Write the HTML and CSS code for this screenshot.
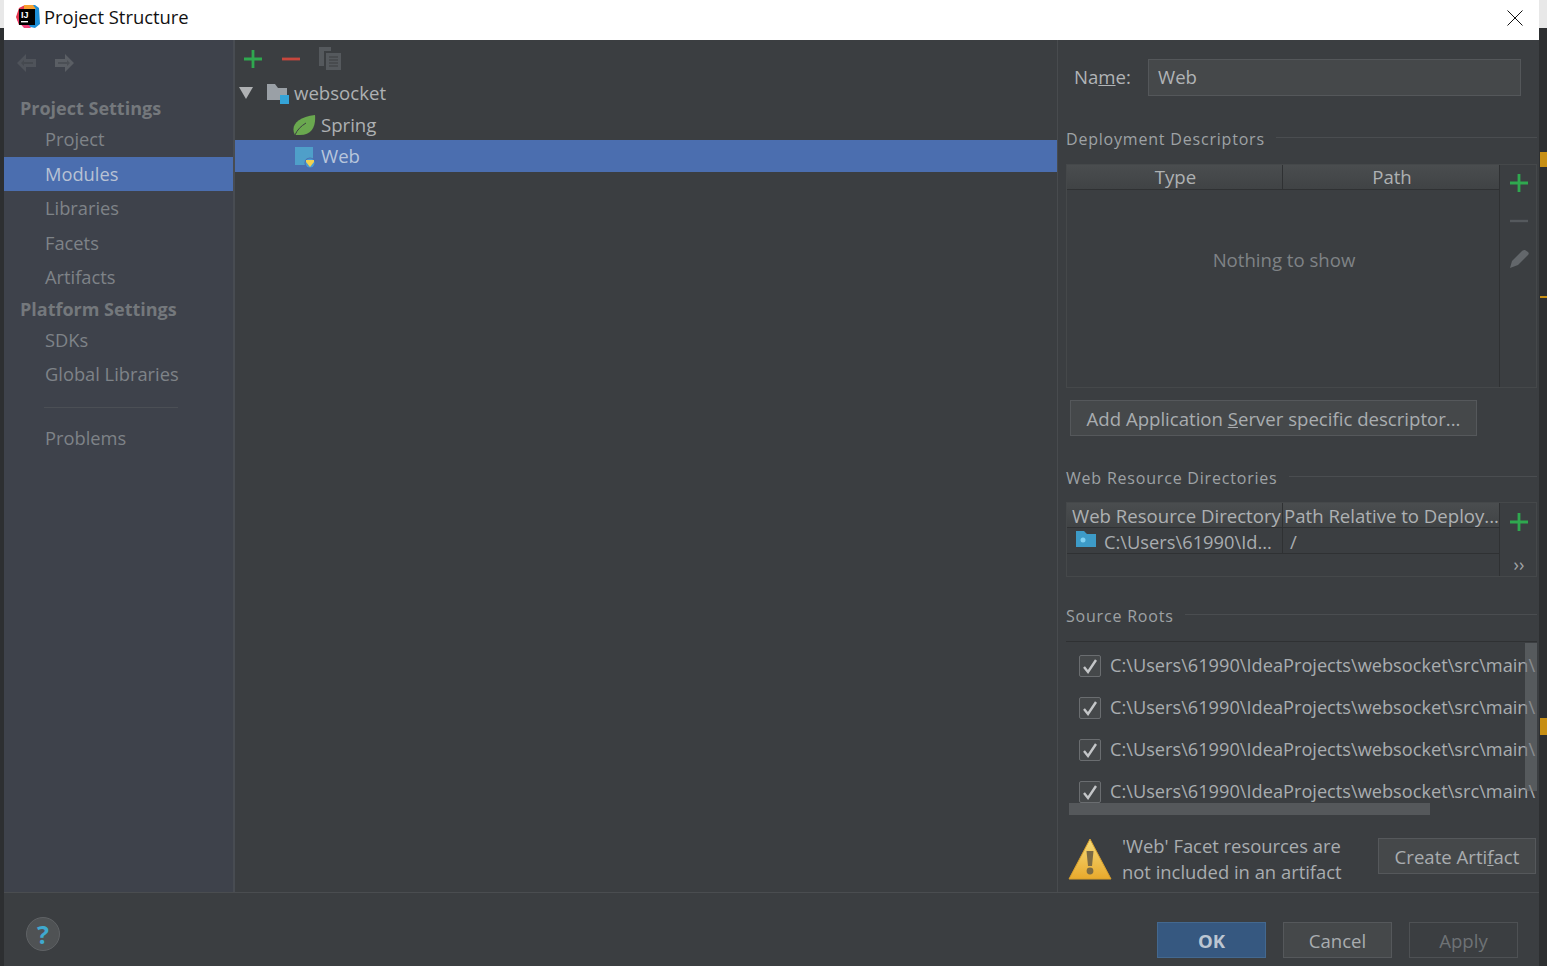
FILE: index.html
```html
<!DOCTYPE html>
<html lang="en">
<head>
<meta charset="utf-8">
<title>Project Structure</title>
<link rel="stylesheet" href="styles.css">
</head>
<body>
<svg class="defs" width="0" height="0">
  <symbol id="plus" viewBox="0 0 20 20"><path d="M10 1v18M1 10h18" fill="none" stroke="#2fa84f" stroke-width="2.800"/></symbol>
</svg>
<div class="screen">
  <div class="strip strip-left"><span class="strip-cap"></span></div>
  <div class="dialog">
    <header class="titlebar">
      <svg class="logo" width="24" height="24" viewBox="0 0 24 24">
        <path d="M3 3 9 0 10 14 3 20 0 12z" fill="#e5364f"/>
        <path d="M10 0h9l4 3 1 16-5 4-9-2z" fill="#1d8fd8"/>
        <path d="M1 15 8 23h7l-7-10z" fill="#f0407a"/>
        <path d="M8 0h9l3 4H8z" fill="#f7a030"/>
        <rect x="3" y="4" width="16" height="16" fill="#000"/>
        <text x="5" y="13" class="logo-text">IJ</text>
        <rect x="5" y="16" width="7" height="1.400" fill="#fff"/>
      </svg>
      <span class="title-text">Project Structure</span>
      <svg class="close" width="16" height="16" viewBox="0 0 16 16"><path d="M.5.5l15 15M15.500.5l-15 15" stroke="#111" stroke-width="1" fill="none"/></svg>
    </header>
    <div class="main">
      <nav class="sidebar">
        <div class="nav-arrows">
          <svg width="20" height="20" viewBox="0 0 20 20"><path d="M9 1 0 10l9 9v-5h10V6H9z" fill="#4f535a"/><path d="M7 7 4 10l3 3v-2h9V9H7z" fill="#45494f"/></svg>
          <svg width="20" height="20" viewBox="0 0 20 20"><path d="M11 1l9 9-9 9v-5H1V6h10z" fill="#5a5e64"/><path d="M13 7l3 3-3 3v-2H4V9h9z" fill="#4b4f55"/></svg>
        </div>
        <div class="nav-head nav-head-first">Project Settings</div>
        <div class="nav-item">Project</div>
        <div class="nav-item active">Modules</div>
        <div class="nav-item">Libraries</div>
        <div class="nav-item">Facets</div>
        <div class="nav-item">Artifacts</div>
        <div class="nav-head">Platform Settings</div>
        <div class="nav-item">SDKs</div>
        <div class="nav-item">Global Libraries</div>
        <div class="nav-sep"></div>
        <div class="nav-item">Problems</div>
      </nav>
      <section class="tree-pane">
        <div class="tree-tools">
          <svg class="tool-plus" width="20" height="20"><use href="#plus"/></svg>
          <svg class="tool-minus" width="20" height="20" viewBox="0 0 20 20"><path d="M1 10h18" stroke="#c7473d" stroke-width="2.800"/></svg>
          <svg class="tool-copy" width="22" height="24" viewBox="0 0 22 24"><path d="M0 0h12v4H5v15H0z" fill="#55595d"/><path d="M7 6h15v17H7z" fill="#55595d"/><path d="M10 10h9M10 13h9M10 16h9M10 19h9" stroke="#3c3f41" stroke-width="1.200"/></svg>
        </div>
        <div class="tree-row tree-root">
          <svg class="twisty" width="14" height="12" viewBox="0 0 14 12"><path d="M0 0h14L7 12z" fill="#afb1b3"/></svg>
          <svg class="module-icon" width="24" height="22" viewBox="0 0 24 22"><path d="M1 1h8l3 4h9v12H1z" fill="#9aa0a6"/><rect x="14" y="12" width="9" height="9" fill="#35a4d8"/></svg>
          <span>websocket</span>
        </div>
        <div class="tree-row tree-child tree-spring">
          <svg width="24" height="22" viewBox="0 0 24 22"><path d="M3 21C-2 12 5 3 23 1c1 11-3 20-15 20-2 0-4 0-5 0z" fill="#6aa84f"/><path d="M3 21c2-5 6-9 11-12" fill="none" stroke="#3b3e41" stroke-width="1"/></svg>
          <span>Spring</span>
        </div>
        <div class="tree-row tree-child selected">
          <svg width="24" height="22" viewBox="0 0 24 22"><rect x="3" y="1" width="18" height="18" fill="#4f9fc9"/><circle cx="18" cy="17" r="5.500" fill="#4b6eaf"/><circle cx="18" cy="17" r="4.500" fill="#4a9bd4"/><path d="M14 14h8v2l-4 5-4-5z" fill="#f2d250"/></svg>
          <span>Web</span>
        </div>
      </section>
      <section class="detail">
        <div class="name-row">
          <label class="name-label">Na<u>m</u>e:</label>
          <div class="name-input">Web</div>
        </div>
        <div class="group-title group-deploy"><span>Deployment Descriptors</span><i></i></div>
        <div class="table table-deploy">
          <div class="table-body">
            <div class="thead"><div class="th th-a">Type</div><div class="th th-b">Path</div></div>
            <div class="empty">Nothing to show</div>
          </div>
          <div class="table-tools">
            <svg width="20" height="20"><use href="#plus"/></svg>
            <svg width="20" height="20" viewBox="0 0 20 20"><path d="M1 10h18" stroke="#55595d" stroke-width="2.400"/></svg>
            <svg width="20" height="20" viewBox="0 0 20 20"><path d="M1 19l2-7L13 2c1-1 2-1 3-1l3 2c1 1 1 2 0 3L9 16z" fill="#63676b"/></svg>
          </div>
        </div>
        <div class="btn btn-add">Add Application <u>S</u>erver specific descriptor...</div>
        <div class="group-title group-web"><span>Web Resource Directories</span><i></i></div>
        <div class="table table-web">
          <div class="table-body">
            <div class="thead"><div class="th th-a th-left">Web Resource Directory</div><div class="th th-b th-left">Path Relative to Deploy...</div></div>
            <div class="tr">
              <div class="td td-a">
                <svg width="22" height="18" viewBox="0 0 22 18"><path d="M1 1h8l3 3h9v13H1z" fill="#3d9bc8"/><circle cx="8" cy="10" r="2.500" fill="#7fd0f2"/></svg>
                <span>C:\Users\61990\Id...</span>
              </div>
              <div class="td td-b">/</div>
            </div>
          </div>
          <div class="table-tools table-tools-web">
            <svg width="20" height="20"><use href="#plus"/></svg>
            <span class="more">&#8250;&#8250;</span>
          </div>
        </div>
        <div class="group-title group-src"><span>Source Roots</span><i></i></div>
        <div class="roots">
          <div class="root"><span class="check"><svg width="16" height="16" viewBox="0 0 16 16"><path d="M2 9l4 5 8-12" fill="none" stroke="#c4c6c8" stroke-width="2.400"/></svg></span><span class="root-path">C:\Users\61990\IdeaProjects\websocket\src\main\</span></div>
          <div class="root"><span class="check"><svg width="16" height="16" viewBox="0 0 16 16"><path d="M2 9l4 5 8-12" fill="none" stroke="#c4c6c8" stroke-width="2.400"/></svg></span><span class="root-path">C:\Users\61990\IdeaProjects\websocket\src\main\</span></div>
          <div class="root"><span class="check"><svg width="16" height="16" viewBox="0 0 16 16"><path d="M2 9l4 5 8-12" fill="none" stroke="#c4c6c8" stroke-width="2.400"/></svg></span><span class="root-path">C:\Users\61990\IdeaProjects\websocket\src\main\</span></div>
          <div class="root"><span class="check"><svg width="16" height="16" viewBox="0 0 16 16"><path d="M2 9l4 5 8-12" fill="none" stroke="#c4c6c8" stroke-width="2.400"/></svg></span><span class="root-path">C:\Users\61990\IdeaProjects\websocket\src\main\</span></div>
          <span class="scroll-v"></span>
          <span class="scroll-h"></span>
        </div>
        <div class="warn-row">
          <svg class="warn-icon" width="44" height="42" viewBox="0 0 44 42"><defs><linearGradient id="warn" x1="0" y1="0" x2="0" y2="1"><stop offset="0" stop-color="#f6dc7a"/><stop offset="1" stop-color="#e8a92c"/></linearGradient></defs><path d="M22 1 43 41H1z" fill="url(#warn)" stroke="#d79f2c"/><path d="M18.500 13h7l-1.500 15h-4z" fill="#7a6a45"/><circle cx="22" cy="33" r="3.400" fill="#7a6a45"/></svg>
          <div class="warn-text">'Web' Facet resources are<br>not included in an artifact</div>
          <div class="btn btn-artifact">Create Arti<u>f</u>act</div>
        </div>
      </section>
    </div>
    <footer class="footer">
      <div class="help">?</div>
      <div class="btn-group">
        <div class="btn btn-foot btn-ok">OK</div>
        <div class="btn btn-foot">Cancel</div>
        <div class="btn btn-foot btn-disabled">Apply</div>
      </div>
    </footer>
  </div>
  <div class="strip strip-right">
    <span class="strip-cap"></span>
    <span class="mark mark-a"></span>
    <span class="mark mark-b"></span>
    <span class="mark mark-c"></span>
  </div>
</div>
</body>
</html>
```
FILE: styles.css
```css
* { box-sizing: border-box; }
html, body { margin: 0; height: 100%; overflow: hidden; }
body { background: #2b2d2f; font-family: "Open Sans", "Noto Sans", sans-serif; font-size: 18.6px; color: #a9adb0; }
.defs { position: absolute; }
.screen { display: flex; width: 1547px; height: 966px; }
.strip { position: relative; background: #2d2f31; }
.strip-left { width: 4px; }
.strip-right { width: 8px; }
.strip-cap { display: block; height: 28px; background: #e8e8e8; }
.mark { position: absolute; left: 1px; right: 0; background: #c78f14; }
.mark-a { top: 152px; height: 15px; }
.mark-b { top: 296px; height: 2px; }
.mark-c { top: 718px; height: 17px; }

.dialog { width: 1535px; display: flex; flex-direction: column; background: #3b3e41; }
.titlebar { height: 40px; flex: none; background: #fff; display: flex; align-items: center; padding: 0 16px 8px 12px; color: #111; }
.logo { flex: none; margin-bottom: -2px; }
.logo-text { font: 700 9px "Liberation Sans", sans-serif; fill: #fff; }
.title-text { margin-left: 4px; font-size: 18.400px; flex: 1; }
.close { flex: none; margin-bottom: -3px; }

.main { height: 853px; flex: none; display: flex; border-bottom: 1px solid #4a4d50; }
.sidebar { width: 231px; flex: none; background: #3e424b; border-right: 2px solid #484c52; padding-top: 13px; }
.nav-arrows { display: flex; gap: 17px; padding-left: 13px; height: 24px; }
.nav-head { height: 28px; line-height: 28px; padding-left: 16px; font-weight: 700; font-size: 18px; color: #74787c; }
.nav-head-first { margin-top: 17px; }
.nav-item { height: 34.500px; line-height: 34.500px; padding-left: 41px; font-size: 18.300px; color: #7e8388; }
.nav-item.active { background: #4b6eaf; color: #b8c2d4; }
.nav-sep { height: 1px; margin: 15px 55px 13px 40px; background: #4b4f55; }

.tree-pane { width: 822px; flex: none; background: #3b3e41; }
.tree-tools { display: flex; align-items: center; height: 37px; padding: 0 0 0 8px; }
.tool-minus { margin-left: 18px; }
.tool-copy { margin-left: 18px; margin-top: 1px; }
.tree-row { height: 32px; display: flex; align-items: center; color: #aeb1b3; }
.tree-row span { margin-top: -2px; }
.tree-row.tree-spring { height: 31px; }
.tree-row.tree-spring span { margin-top: 0; }
.tree-root { padding-left: 4px; }
.twisty { margin-right: 13px; }
.module-icon { margin: 2px 4px 0 0; }
.tree-child { padding-left: 57px; gap: 5px; }
.tree-child svg { flex: none; }
.selected { background: #4b6eaf; color: #b8c6dc; }
.selected svg { margin-top: 2px; }

.detail { flex: 1; min-width: 0; border-left: 1px solid #484b4e; padding: 0 2px 0 8px; }
.name-row { display: flex; align-items: center; height: 37px; margin-top: 19px; padding-left: 8px; }
.name-label { width: 74px; margin-top: -2px; color: #b1b4b6; }
.name-input { width: 373px; height: 37px; line-height: 33px; padding-left: 9px; background: #45484a; border: 1px solid #54575a; color: #b1b4b6; }
.group-title { display: flex; align-items: center; gap: 11px; font-size: 16px; letter-spacing: .8px; color: #9ea2a5; height: 24px; }
.group-title i { flex: 1; height: 1px; background: #4a4d50; margin-top: -4px; }
.group-deploy { margin-top: 31px; }
.table { display: flex; border: 1px solid #45484a; }
.table-deploy { height: 224px; margin-top: 13px; }
.table-web { height: 75px; margin-top: 12px; }
.table-body { width: 433px; flex: none; border-right: 1px solid #2f3133; }
.thead { display: flex; height: 25px; background: linear-gradient(#4a4d4f, #404345); border-bottom: 1px solid #2f3133; }
.th { line-height: 24px; text-align: center; color: #aeb1b3; overflow: hidden; white-space: nowrap; }
.table-deploy .th { padding-left: 2px; }
.table-web .th { line-height: 26px; }
.th-a { width: 216px; flex: none; border-right: 1px solid #2f3133; }
.th-b { flex: 1; }
.th-left { text-align: left; }
.th-a.th-left { padding-left: 5px; }
.th-b.th-left { padding-left: 1px; }
.empty { text-align: center; margin-top: 57px; padding-left: 2px; color: #7f8386; }
.table-tools { flex: 1; display: flex; flex-direction: column; align-items: center; gap: 18px; padding: 8px 0 0 2px; }
.table-tools-web { gap: 23px; padding-top: 9px; }
.more { line-height: 18px; font-size: 18px; color: #a0a3a6; }
.tr { display: flex; height: 26px; border-bottom: 1px solid #2f3133; color: #a9adb0; }
.td { line-height: 27px; white-space: nowrap; overflow: hidden; }
.td-a { width: 216px; flex: none; display: flex; align-items: center; gap: 7px; padding: 2px 0 0 8px; border-right: 1px solid #2f3133; font-size: 18.300px; }
.td-a svg { flex: none; margin-top: -6px; }
.td-a span { line-height: 24px; }
.td-b { padding-left: 7px; }
.btn { border: 1px solid #55585b; background: #45484a; text-align: center; color: #a9adb0; white-space: nowrap; }
.btn-add { width: 407px; height: 36px; line-height: 36px; margin: 12px 0 0 4px; }
.group-web { margin-top: 30px; }
.group-src { margin-top: 27px; }
.roots { position: relative; height: 174px; margin-top: 13px; border-top: 1px solid #2f3133; overflow: hidden; padding-top: 3px; }
.root { height: 42px; display: flex; align-items: center; padding-left: 13px; gap: 9px; white-space: nowrap; font-size: 18.200px; color: #a9adb0; }
.root-path { margin-top: -2px; }
.check { width: 22px; height: 22px; flex: none; border: 1px solid #6a6d70; border-radius: 2px; background: #45484a; display: flex; align-items: center; justify-content: center; }
.scroll-v { position: absolute; right: 0; top: 1px; width: 12px; height: 148px; background: rgba(110, 113, 116, .55); }
.scroll-h { position: absolute; left: 3px; bottom: 0; width: 361px; height: 12px; background: #55585b; }
.warn-row { display: flex; align-items: flex-start; margin-top: 23px; padding-left: 2px; }
.warn-icon { flex: none; }
.warn-text { width: 256px; margin: -5px 0 0 10px; line-height: 26px; font-size: 18.400px; color: #a9adb0; white-space: nowrap; }
.btn-artifact { width: 158px; height: 36px; line-height: 36px; }

.footer { flex: 1; display: flex; align-items: flex-start; justify-content: space-between; padding: 29px 21px 0 22px; }
.help { width: 34px; height: 34px; margin-top: -5px; border-radius: 50%; background: #4f5254; border: 1px solid #5f6265; text-align: center; line-height: 32px; font-weight: 700; font-size: 25px; color: #3fa9cf; }
.btn-group { display: flex; gap: 17px; }
.btn-foot { width: 109px; height: 36px; line-height: 36px; background: #45484a; }
.btn-ok { background: #365880; border-color: #43688f; color: #bcc6d2; font-weight: 700; }
.btn-disabled { background: #3b3e41; border-color: #4e5154; color: #6e7275; }
```
